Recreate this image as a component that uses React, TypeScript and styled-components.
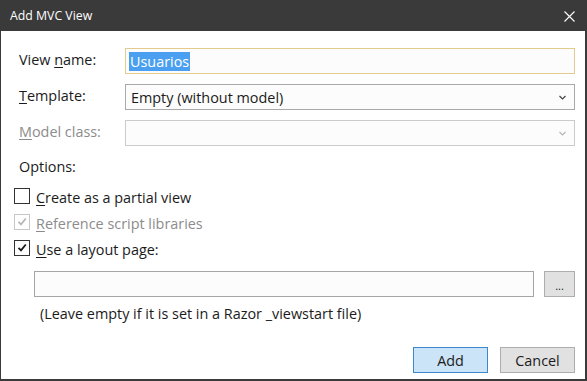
import React from "react";
import styled, { createGlobalStyle } from "styled-components";

const Global = createGlobalStyle`
  html, body { margin: 0; padding: 0; background: #ffffff; }
  body { font-family: "Open Sans", "Noto Sans", sans-serif; }
  * { box-sizing: border-box; }
`;

const Window = styled.div`
  width: 587px;
  height: 381px;
  display: flex;
  flex-direction: column;
  background: #ffffff;
  border: 1px solid #3a3a3a;
  border-right-width: 2px;
  border-bottom-width: 2px;
  font-size: 14.4px;
  color: #1b1b1b;
`;

const TitleBar = styled.div`
  height: 30px;
  flex: none;
  background: #3a3a3a;
  display: flex;
  align-items: center;
  justify-content: space-between;
  padding: 0 9px 0 9px;
  color: #ffffff;
  font-size: 12.3px;
`;

const Title = styled.span`
  margin-top: -1px;
`;

const CloseButton = styled.div`
  width: 14px;
  height: 14px;
  display: flex;
  align-items: center;
  justify-content: center;
`;

const Body = styled.div`
  flex: 1;
  display: flex;
  flex-direction: column;
  padding: 17px 10px 0 13px;
`;

const FieldGrid = styled.div`
  display: grid;
  grid-template-columns: 106px 1fr;
  row-gap: 10px;
  align-items: center;
  padding-left: 5px;
`;

const Label = styled.label<{ $disabled?: boolean }>`
  color: ${(p) => (p.$disabled ? "#8c8c8c" : "#1b1b1b")};
  line-height: 20px;
  margin-top: -2px;
`;

const Key = styled.span`
  text-decoration: underline;
  text-underline-offset: 2px;
  text-decoration-thickness: 1px;
`;

const TextBox = styled.div<{ $focused?: boolean }>`
  height: 26px;
  border: 1px solid ${(p) => (p.$focused ? "#e2cb8c" : "#a9a9a9")};
  background: #fcfcfc;
  display: flex;
  align-items: center;
  padding: 0 3px;
`;

const Selected = styled.span`
  background: #4a9ff0;
  color: #ffffff;
  line-height: 19px;
  padding: 0 1px 0 1px;
`;

const Select = styled.div<{ $disabled?: boolean }>`
  height: 26px;
  border: 1px solid ${(p) => (p.$disabled ? "#cbcbcb" : "#a9a9a9")};
  background: #fcfcfc;
  display: flex;
  align-items: center;
  justify-content: space-between;
  padding: 0 8px 0 5px;
  color: #1b1b1b;
`;

const SectionLabel = styled.div`
  padding-left: 5px;
  margin-top: 11px;
  line-height: 20px;
`;

const CheckList = styled.div`
  display: flex;
  flex-direction: column;
  gap: 6px;
  margin-top: 10px;
`;

const CheckRow = styled.div<{ $disabled?: boolean }>`
  display: flex;
  align-items: center;
  gap: 6px;
  height: 20px;
  color: ${(p) => (p.$disabled ? "#8c8c8c" : "#1b1b1b")};
`;

const Box = styled.span<{ $disabled?: boolean }>`
  width: 16px;
  height: 16px;
  flex: none;
  border: 1px solid ${(p) => (p.$disabled ? "#c6c6c6" : "#333333")};
  background: #ffffff;
  display: flex;
  align-items: center;
  justify-content: center;
  margin-top: -3px;
`;

const CheckText = styled.span`
  line-height: 20px;
  margin-top: 1px;
`;

const LayoutRow = styled.div`
  display: flex;
  gap: 10px;
  margin-top: 12px;
  padding-left: 20px;
`;

const LayoutInput = styled.div`
  flex: 1;
  height: 26px;
  border: 1px solid #a5a5a5;
  background: #fcfcfc;
`;

const Button = styled.button<{ $primary?: boolean; $width?: number }>`
  height: 26px;
  width: ${(p) => p.$width ?? 75}px;
  border: 1px solid ${(p) => (p.$primary ? "#3d87cc" : "#adadad")};
  background: ${(p) => (p.$primary ? "#cce4f7" : "#e1e1e1")};
  font-family: "Open Sans", "Noto Sans", sans-serif;
  font-size: 14.4px;
  color: #1b1b1b;
  padding: 0;
  display: flex;
  align-items: center;
  justify-content: center;
`;

const Dots = styled.span`
  font-size: 11px;
  margin-top: 2px;
`;

const Hint = styled.div`
  padding-left: 26px;
  margin-top: 7px;
  line-height: 20px;
`;

const Footer = styled.div`
  display: flex;
  justify-content: flex-end;
  gap: 12px;
  margin-top: auto;
  padding-bottom: 6px;
`;

const Chevron = ({ color }: { color: string }) => (
  <svg width="7" height="5" viewBox="0 0 7 5">
    <path d="M0.5 1 L3.5 4 L6.5 1" fill="none" stroke={color} strokeWidth="1.2" />
  </svg>
);

const Check = ({ color }: { color: string }) => (
  <svg width="10" height="9" viewBox="0 0 10 9">
    <path d="M1.5 4.8 L4 7.3 L8.8 1.5" fill="none" stroke={color} strokeWidth="1.8" />
  </svg>
);

export default function App() {
  return (
    <>
      <Global />
      <Window>
        <TitleBar>
          <Title>Add MVC View</Title>
          <CloseButton>
            <svg width="11" height="11" viewBox="0 0 11 11">
              <path d="M0.5 0.5 L10.5 10.5 M10.5 0.5 L0.5 10.5" stroke="#ffffff" strokeWidth="1.1" />
            </svg>
          </CloseButton>
        </TitleBar>
        <Body>
          <FieldGrid>
            <Label>
              View <Key>n</Key>ame:
            </Label>
            <TextBox $focused>
              <Selected>Usuarios</Selected>
            </TextBox>
            <Label>
              <Key>T</Key>emplate:
            </Label>
            <Select>
              <span>Empty (without model)</span>
              <Chevron color="#444444" />
            </Select>
            <Label $disabled>
              <Key>M</Key>odel class:
            </Label>
            <Select $disabled>
              <span />
              <Chevron color="#b5b5b5" />
            </Select>
          </FieldGrid>
          <SectionLabel>Options:</SectionLabel>
          <CheckList>
            <CheckRow>
              <Box />
              <CheckText>
                <Key>C</Key>reate as a partial view
              </CheckText>
            </CheckRow>
            <CheckRow $disabled>
              <Box $disabled>
                <Check color="#b8b8b8" />
              </Box>
              <CheckText>
                <Key>R</Key>eference script libraries
              </CheckText>
            </CheckRow>
            <CheckRow>
              <Box>
                <Check color="#1b1b1b" />
              </Box>
              <CheckText>
                <Key>U</Key>se a layout page:
              </CheckText>
            </CheckRow>
          </CheckList>
          <LayoutRow>
            <LayoutInput />
            <Button $width={31}>
              <Dots>...</Dots>
            </Button>
          </LayoutRow>
          <Hint>(Leave empty if it is set in a Razor _viewstart file)</Hint>
          <Footer>
            <Button $primary>Add</Button>
            <Button>Cancel</Button>
          </Footer>
        </Body>
      </Window>
    </>
  );
}
